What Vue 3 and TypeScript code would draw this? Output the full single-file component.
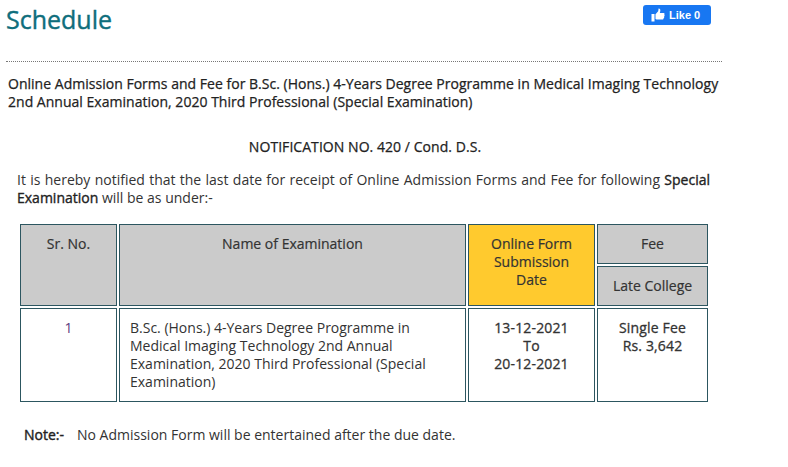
<script setup lang="ts">
const title = 'Schedule'
</script>

<template>
  <div class="page">
    <header class="head">
      <h1 class="title">{{ title }}</h1>
      <button class="like" type="button">
        <svg class="thumb" width="14" height="14" viewBox="0 0 14 14" aria-hidden="true">
          <rect x="0.5" y="6" width="3" height="7.5" fill="#fff" />
          <path d="M4.5 6.2 7.2 3.2 7.6 0.6C8.9 0.5 9.6 1.5 9.3 3L8.8 5H12.6C13.6 5 13.8 6 13.3 6.6 13.8 7.1 13.7 8 13.1 8.4 13.4 9 13.2 9.8 12.6 10.1 12.8 10.9 12.3 11.6 11.5 11.6H7C5.9 11.6 5.2 11.3 4.5 11Z" fill="#fff" />
        </svg>
        <span>Like 0</span>
      </button>
    </header>
    <div class="intro">
      <p class="subject">Online Admission Forms and Fee for B.Sc. (Hons.) 4-Years Degree Programme in Medical Imaging Technology 2nd Annual Examination, 2020 Third Professional (Special Examination)</p>
      <p class="notification">NOTIFICATION NO. 420 / Cond. D.S.</p>
      <p class="lead">It is hereby notified that the last date for receipt of Online Admission Forms and Fee for following <b>Special Examination</b> will be as under:-</p>
    </div>
    <table class="sched">
      <colgroup>
        <col class="c1" /><col class="c2" /><col class="c3" /><col class="c4" />
      </colgroup>
      <thead>
        <tr>
          <th rowspan="2">Sr. No.</th>
          <th rowspan="2">Name of Examination</th>
          <th rowspan="2" class="date-head">Online Form Submission Date</th>
          <th class="short">Fee</th>
        </tr>
        <tr>
          <th class="short">Late College</th>
        </tr>
      </thead>
      <tbody>
        <tr>
          <td class="sr">1</td>
          <td class="name">B.Sc. (Hons.) 4-Years Degree Programme in Medical Imaging Technology 2nd Annual Examination, 2020 Third Professional (Special Examination)</td>
          <td class="strong">13-12-2021<br />To<br />20-12-2021</td>
          <td class="strong">Single Fee<br />Rs. 3,642</td>
        </tr>
      </tbody>
    </table>
    <p class="note"><b>Note:-</b><span>No Admission Form will be entertained after the due date.</span></p>
  </div>
</template>

<style>
html, body { margin: 0; background: #fff; }
</style>

<style scoped>
.page {
  width: 788px;
  height: 467px;
  overflow: hidden;
  font-family: "Open Sans", sans-serif;
  font-size: 14px;
  line-height: 18px;
  color: #333;
}
.head {
  box-sizing: border-box;
  width: 716px;
  height: 62px;
  margin-left: 6px;
  padding-top: 4px;
  padding-right: 11px;
  border-bottom: 1px dotted #777;
  display: flex;
  justify-content: space-between;
  align-items: flex-start;
}
.title {
  margin: 0;
  font-size: 25px;
  line-height: 30px;
  font-weight: 400;
  color: #0f6e7c;
  -webkit-text-stroke: 0.4px #0f6e7c;
}
.like {
  width: 68px;
  height: 20px;
  margin-top: 1px;
  padding: 0 0 0 8px;
  border: 0;
  border-radius: 3px;
  background: #1877f2;
  color: #fff;
  font-family: "Liberation Sans", sans-serif;
  font-size: 11px;
  font-weight: 700;
  display: flex;
  align-items: center;
  gap: 4px;
}
.thumb { flex: none; }
.intro { padding-left: 8px; width: 714px; }
.subject {
  margin: 13px 0 0;
  color: #222;
  letter-spacing: 0.02px;
  -webkit-text-stroke: 0.25px #222;
}
.notification {
  margin: 27px 0 0;
  text-align: center;
  color: #222;
  letter-spacing: 0.05px;
  -webkit-text-stroke: 0.25px #222;
}
.lead { margin: 15px 12px 0 9px; text-align: justify; }
.lead b { font-weight: 400; color: #222; -webkit-text-stroke: 0.35px #222; }
.sched {
  margin: 15px 0 0 18px;
  width: 690px;
  table-layout: fixed;
  border-collapse: separate;
  border-spacing: 2px;
}
.c1 { width: 97px; }
.c2 { width: 347px; }
.c3 { width: 127px; }
.c4 { width: 111px; }
.sched th, .sched td {
  border: 1px solid #2c5660;
  vertical-align: top;
  padding: 10px;
  box-sizing: border-box;
  text-align: center;
}
.sched th {
  background: #cbcbcb;
  font-weight: 400;
  color: #333;
  height: 40px;
  -webkit-text-stroke: 0.2px #333;
}
.sched th.short { padding: 10px 4px; }
.sched th.date-head { background: #ffca2e; padding: 10px 14px; }
.sched td { background: #fff; height: 94px; }
.sr { color: #5c3a7e; }
.sched td.name { text-align: left; }
.strong { letter-spacing: 0.15px; -webkit-text-stroke: 0.3px #333; }
.note { margin: 22px 0 0 24px; }
.note b { font-weight: 400; color: #222; margin-right: 13px; -webkit-text-stroke: 0.4px #222; }
</style>
